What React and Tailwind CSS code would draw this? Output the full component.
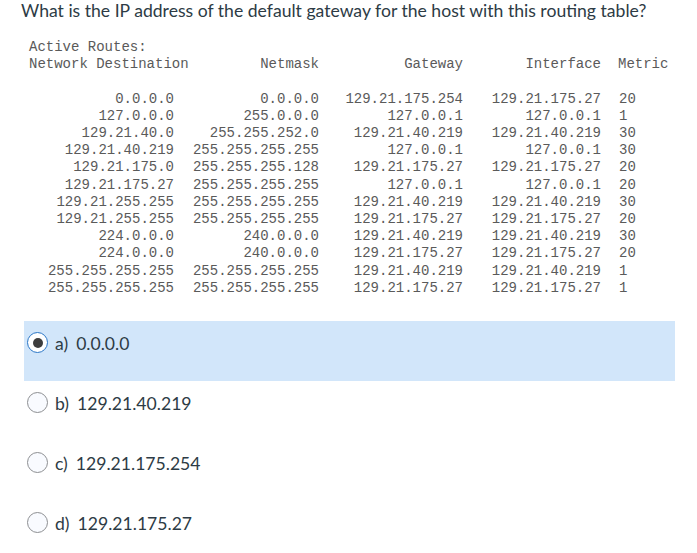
import React from "react";

const routes = [
  ["0.0.0.0", "0.0.0.0", "129.21.175.254", "129.21.175.27", "20"],
  ["127.0.0.0", "255.0.0.0", "127.0.0.1", "127.0.0.1", "1"],
  ["129.21.40.0", "255.255.252.0", "129.21.40.219", "129.21.40.219", "30"],
  ["129.21.40.219", "255.255.255.255", "127.0.0.1", "127.0.0.1", "30"],
  ["129.21.175.0", "255.255.255.128", "129.21.175.27", "129.21.175.27", "20"],
  ["129.21.175.27", "255.255.255.255", "127.0.0.1", "127.0.0.1", "20"],
  ["129.21.255.255", "255.255.255.255", "129.21.40.219", "129.21.40.219", "30"],
  ["129.21.255.255", "255.255.255.255", "129.21.175.27", "129.21.175.27", "20"],
  ["224.0.0.0", "240.0.0.0", "129.21.40.219", "129.21.40.219", "30"],
  ["224.0.0.0", "240.0.0.0", "129.21.175.27", "129.21.175.27", "20"],
  ["255.255.255.255", "255.255.255.255", "129.21.40.219", "129.21.40.219", "1"],
  ["255.255.255.255", "255.255.255.255", "129.21.175.27", "129.21.175.27", "1"],
];

const answers = [
  { key: "a)", text: "0.0.0.0", selected: true },
  { key: "b)", text: "129.21.40.219" },
  { key: "c)", text: "129.21.175.254" },
  { key: "d)", text: "129.21.175.27" },
];

// one line of the routing table, right-aligned columns
const Row = ({ cells }) => (
  <div className="flex whitespace-pre">
    <div className="w-[145px] text-right">{cells[0]}</div>
    <div className="w-[145px] text-right">{cells[1]}</div>
    <div className="w-[144px] text-right">{cells[2]}</div>
    <div className="w-[138px] text-right">{cells[3]}</div>
    <div className="ml-[18px]">{cells[4]}</div>
  </div>
);

const Radio = ({ checked }) =>
  checked ? (
    <span className="flex h-[21px] w-[21px] shrink-0 items-center justify-center rounded-full border-[1.5px] border-[#2a76c6] bg-white">
      <span className="h-[10px] w-[10px] rounded-full bg-[#3d3d3d]" />
    </span>
  ) : (
    <span className="h-[21px] w-[21px] shrink-0 rounded-full border-[1.5px] border-[#8d8f92] bg-[#f9fbff]" />
  );

export default function App() {
  return (
    <div className="min-h-[553px] w-[697px] bg-white font-['Lato','Noto_Sans',sans-serif] text-[#2d3b45]">
      {/* Question */}
      <div className="pl-[21px] text-[17.6px] leading-[22px]">
        What is the IP address of the default gateway for the host with this routing table?
      </div>

      {/* Routing table */}
      <div className="pt-[17px] pl-[29px] font-['Liberation_Mono','Courier_New',monospace] text-[14px] leading-[17.2px] text-[#5a5a5a]">
        <div>Active Routes:</div>
        <div className="flex whitespace-pre">
          <div className="w-[145px]">Network Destination</div>
          <div className="w-[145px] text-right">Netmask</div>
          <div className="w-[144px] text-right">Gateway</div>
          <div className="w-[138px] text-right">Interface</div>
          <div className="ml-[17px]">Metric</div>
        </div>
        <div className="h-[17.2px]" />
        {routes.map((r, i) => (
          <Row key={i} cells={r} />
        ))}
      </div>

      {/* Answers */}
      <div className="mt-[24px] ml-[24px] w-[651px]">
        {answers.map((a) => (
          <div
            key={a.key}
            className={`h-[60px] pl-[3px] pt-[11px] ${a.selected ? "bg-[#d2e6fa]" : ""}`}
          >
            <div className="flex h-[21px] items-center">
              <Radio checked={a.selected} />
              <span className="ml-[7px] mt-[3px] text-[17.6px] leading-[22px]">{a.key}</span>
              <span className="ml-[8px] mt-[3px] text-[17.6px] leading-[22px]">{a.text}</span>
            </div>
          </div>
        ))}
      </div>
    </div>
  );
}
